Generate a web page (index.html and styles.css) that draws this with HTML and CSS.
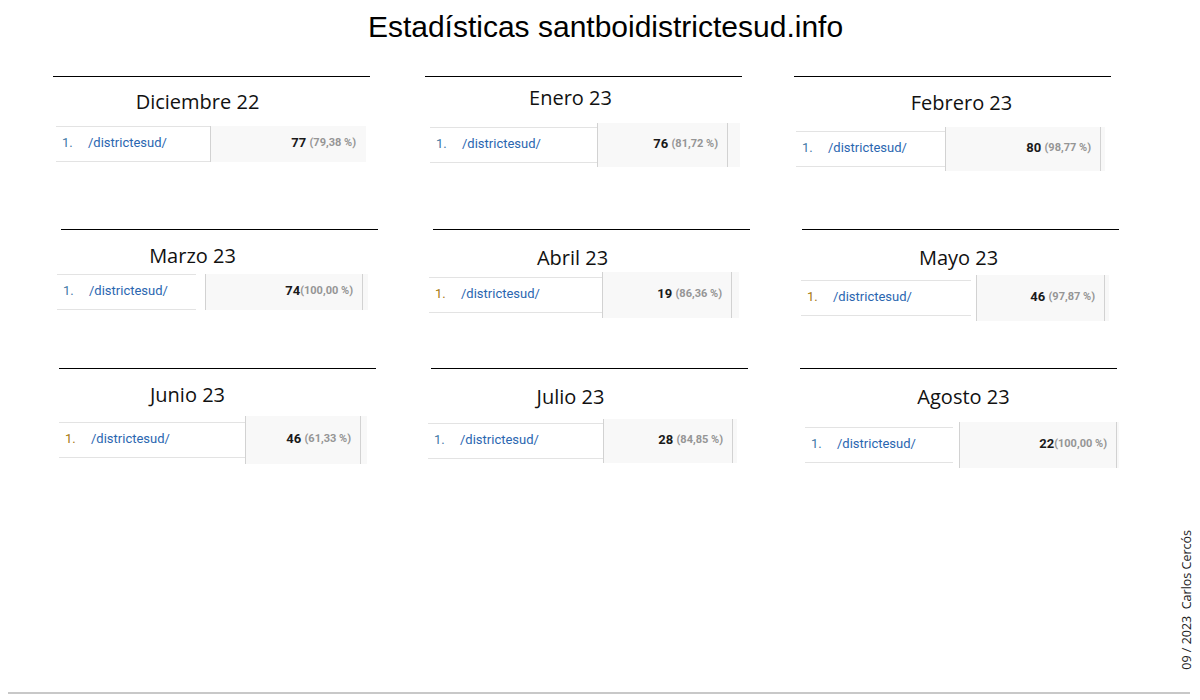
FILE: index.html
```html
<!DOCTYPE html>
<html lang="es">
<head>
<meta charset="utf-8">
<title>Estadísticas santboidistrictesud.info</title>
<link rel="stylesheet" href="styles.css">
</head>
<body>
<div class="page">
  <main class="main">
    <h1 class="title">Estadísticas santboidistrictesud.info</h1>
    <div class="grid">
      <section class="blk r1 b-dic">
        <div class="rule"></div>
        <div class="head"><h2 class="month">Diciembre 22</h2></div>
        <div class="row">
          <div class="name"><span class="num blue">1.</span><span class="link">/districtesud/</span></div>
          <div class="gap"></div>
          <div class="val"><b>77</b>&nbsp;<span class="pct">(79,38 %)</span></div>
          <div class="tail"></div>
        </div>
      </section>
      <section class="blk r1 b-ene">
        <div class="rule"></div>
        <div class="head"><h2 class="month">Enero 23</h2></div>
        <div class="row">
          <div class="name"><span class="num blue">1.</span><span class="link">/districtesud/</span></div>
          <div class="gap"></div>
          <div class="val"><b>76</b>&nbsp;<span class="pct">(81,72 %)</span></div>
          <div class="tail"></div>
        </div>
      </section>
      <section class="blk r1 b-feb">
        <div class="rule"></div>
        <div class="head"><h2 class="month">Febrero 23</h2></div>
        <div class="row">
          <div class="name"><span class="num blue">1.</span><span class="link">/districtesud/</span></div>
          <div class="gap"></div>
          <div class="val"><b>80</b>&nbsp;<span class="pct">(98,77 %)</span></div>
          <div class="tail"></div>
        </div>
      </section>

      <section class="blk r2 b-mar">
        <div class="rule"></div>
        <div class="head"><h2 class="month">Marzo 23</h2></div>
        <div class="row">
          <div class="name"><span class="num blue">1.</span><span class="link">/districtesud/</span></div>
          <div class="gap"></div>
          <div class="val"><b>74</b><span class="pct">(100,00 %)</span></div>
          <div class="tail"></div>
        </div>
      </section>
      <section class="blk r2 b-abr">
        <div class="rule"></div>
        <div class="head"><h2 class="month">Abril 23</h2></div>
        <div class="row">
          <div class="name"><span class="num brown">1.</span><span class="link">/districtesud/</span></div>
          <div class="gap"></div>
          <div class="val"><b>19</b>&nbsp;<span class="pct">(86,36 %)</span></div>
          <div class="tail"></div>
        </div>
      </section>
      <section class="blk r2 b-may">
        <div class="rule"></div>
        <div class="head"><h2 class="month">Mayo 23</h2></div>
        <div class="row">
          <div class="name"><span class="num brown">1.</span><span class="link">/districtesud/</span></div>
          <div class="gap"></div>
          <div class="val"><b>46</b>&nbsp;<span class="pct">(97,87 %)</span></div>
          <div class="tail"></div>
        </div>
      </section>

      <section class="blk r3 b-jun">
        <div class="rule"></div>
        <div class="head"><h2 class="month">Junio 23</h2></div>
        <div class="row">
          <div class="name"><span class="num brown">1.</span><span class="link">/districtesud/</span></div>
          <div class="gap"></div>
          <div class="val"><b>46</b>&nbsp;<span class="pct">(61,33 %)</span></div>
          <div class="tail"></div>
        </div>
      </section>
      <section class="blk r3 b-jul">
        <div class="rule"></div>
        <div class="head"><h2 class="month">Julio 23</h2></div>
        <div class="row">
          <div class="name"><span class="num blue">1.</span><span class="link">/districtesud/</span></div>
          <div class="gap"></div>
          <div class="val"><b>28</b>&nbsp;<span class="pct">(84,85 %)</span></div>
          <div class="tail"></div>
        </div>
      </section>
      <section class="blk r3 b-ago">
        <div class="rule"></div>
        <div class="head"><h2 class="month">Agosto 23</h2></div>
        <div class="row">
          <div class="name"><span class="num blue">1.</span><span class="link">/districtesud/</span></div>
          <div class="gap"></div>
          <div class="val"><b>22</b><span class="pct">(100,00 %)</span></div>
          <div class="tail"></div>
        </div>
      </section>
    </div>
  </main>
  <aside class="side"><span class="credit">09 / 2023  Carlos Cercós</span></aside>
  <div class="baseline"></div>
</div>
</body>
</html>
```

FILE: styles.css
```css
* { box-sizing: border-box; }

html, body {
  margin: 0;
  padding: 0;
  background: #fff;
}

.page {
  width: 1200px;
  height: 700px;
  display: grid;
  grid-template-columns: 1fr 24px;
  grid-template-rows: 1fr auto;
}

.main {
  grid-column: 1;
  grid-row: 1;
  min-width: 0;
}

.title {
  margin: 9px 0 0 0;
  padding-left: 35px;
  font-family: "Liberation Sans", Arial, sans-serif;
  font-weight: normal;
  font-size: 30px;
  line-height: 35px;
  color: #000;
  text-align: center;
}

.grid {
  margin-top: 32px;
  padding-left: 53px;
  display: grid;
  grid-template-columns: 372px 369px 317px;
  grid-template-rows: 153px 139px auto;
}

.blk {
  width: 317px;
}
.r2 { margin-left: 8px; }
.r3 { margin-left: 6px; }

.rule {
  height: 1px;
  background: #000;
}

.head {
  height: calc(var(--st) - 1px);
  padding-top: calc(var(--tt) - 6.5px);
}

.month {
  margin: 0 0 0 calc(2 * var(--sh));
  font-family: "Open Sans", "DejaVu Sans", sans-serif;
  font-weight: normal;
  font-size: 20px;
  line-height: 24px;
  color: #111;
  text-align: center;
}

.row {
  display: flex;
  height: 36px;
  margin-left: var(--sx);
  font-family: Roboto, "Liberation Sans", sans-serif;
  font-size: 13px;
}

.name {
  width: var(--w1);
  flex: none;
  display: flex;
  align-items: center;
  padding: 0 0 3px 6px;
  border-top: 1px solid #e3e3e3;
  border-bottom: 1px solid #e3e3e3;
}

.num {
  width: 26px;
  flex: none;
}
.num.blue { color: #3f78a6; }
.num.brown { color: #a6780f; }

.link {
  color: #2a66b0;
}

.gap {
  width: var(--gp);
  flex: none;
}

.val {
  width: var(--w2);
  flex: none;
  margin: calc(-1 * var(--ext)) 0;
  background: #f8f8f8;
  border-left: 1px solid #d2d2d2;
  border-right: 1px solid var(--vr, #d2d2d2);
  display: flex;
  align-items: center;
  justify-content: flex-end;
  padding: 0 9px 3px 0;
  color: #1a1a1a;
}

.val b {
  font-weight: 700;
}

.pct {
  font-size: 11px;
  font-weight: 700;
  color: #959595;
}

.tail {
  width: var(--w3);
  flex: none;
  margin: calc(-1 * var(--ext)) 0;
  background: #f8f8f8;
}

/* per-snapshot geometry */
.b-dic { --sh: -14px; --tt: 19px; --st: 50px; --sx: 3px;  --w1: 154px; --gp: 0px; --w2: 156px; --w3: 0px;  --ext: 0px; --vr: transparent; }
.b-ene { --sh: -13px; --tt: 15px; --st: 51px; --sx: 5px;  --w1: 167px; --gp: 0px; --w2: 131px; --w3: 12px; --ext: 4px; }
.b-feb { --sh: 9px;   --tt: 20px; --st: 55px; --sx: 2px;  --w1: 149px; --gp: 0px; --w2: 156px; --w3: 4px;  --ext: 4px; }
.b-mar { --sh: -27px; --tt: 20px; --st: 45px; --sx: -4px; --w1: 139px; --gp: 9px; --w2: 158px; --w3: 5px;  --ext: 0px; }
.b-abr { --sh: -19px; --tt: 22px; --st: 48px; --sx: -4px; --w1: 173px; --gp: 0px; --w2: 130px; --w3: 7px;  --ext: 5px; }
.b-may { --sh: -2px;  --tt: 22px; --st: 51px; --sx: -1px; --w1: 170px; --gp: 5px; --w2: 129px; --w3: 4px;  --ext: 5px; }
.b-jun { --sh: -30px; --tt: 20px; --st: 54px; --sx: 0px;  --w1: 186px; --gp: 0px; --w2: 116px; --w3: 6px;  --ext: 6px; }
.b-jul { --sh: -19px; --tt: 22px; --st: 55px; --sx: -3px; --w1: 175px; --gp: 0px; --w2: 130px; --w3: 4px;  --ext: 4px; }
.b-ago { --sh: 5px;   --tt: 22px; --st: 59px; --sx: 5px;  --w1: 148px; --gp: 6px; --w2: 158px; --w3: 2px;  --ext: 5px; }

.side {
  grid-column: 2;
  grid-row: 1;
  display: flex;
  align-items: flex-end;
  justify-content: center;
  padding: 0 2px 22px 0;
}

.credit {
  writing-mode: vertical-rl;
  transform: rotate(180deg);
  white-space: pre;
  font-family: "Open Sans", "DejaVu Sans", sans-serif;
  font-size: 12.5px;
  line-height: 14px;
  color: #222;
}

.baseline {
  grid-column: 1 / -1;
  grid-row: 2;
  height: 2px;
  margin: 0 10px 6px 8px;
  background: #c8c8c8;
}
```
